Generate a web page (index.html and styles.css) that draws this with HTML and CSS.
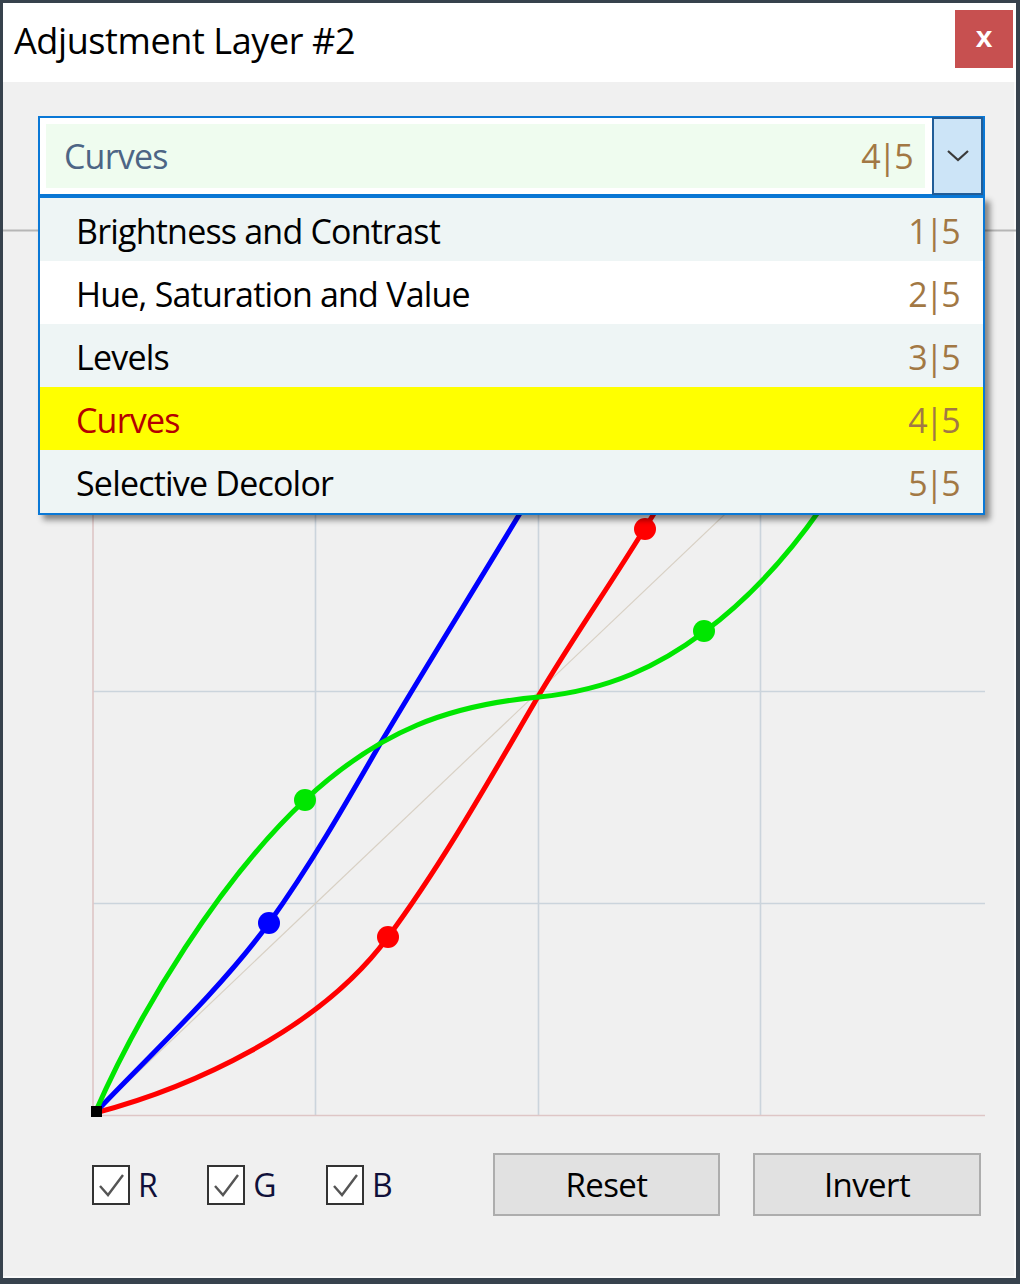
FILE: index.html
```html
<!DOCTYPE html>
<html>
<head>
<meta charset="utf-8">
<link rel="stylesheet" href="styles.css">
</head>
<body>
<div class="window">
  <div class="titlebar">
    <span class="title">Adjustment Layer #2</span>
    <div class="close">x</div>
  </div>
  <div class="main">
    <div class="combo">
      <div class="field"><span class="label">Curves</span><span class="num">4|5</span></div>
      <div class="drop-btn">
        <svg width="24" height="14" viewBox="0 0 24 14"><path d="M2 2 L12 11 L22 2" fill="none" stroke="#3a3a3a" stroke-width="2.2"/></svg>
      </div>
      <ul class="list">
        <li class="row alt"><span>Brightness and Contrast</span><span class="num">1|5</span></li>
        <li class="row"><span>Hue, Saturation and Value</span><span class="num">2|5</span></li>
        <li class="row alt"><span>Levels</span><span class="num">3|5</span></li>
        <li class="row sel"><span>Curves</span><span class="num">4|5</span></li>
        <li class="row alt"><span>Selective Decolor</span><span class="num">5|5</span></li>
      </ul>
    </div>
    <svg class="graph" width="1013" height="939" viewBox="3 196 1013 939">
      <line x1="3" y1="230.5" x2="1016" y2="230.5" stroke="#b6b6b6" stroke-width="2"/>
      <g stroke="#cbd4dc" stroke-width="1.6">
        <line x1="315.5" y1="267" x2="315.5" y2="1115"/>
        <line x1="538.5" y1="267" x2="538.5" y2="1115"/>
        <line x1="760.5" y1="267" x2="760.5" y2="1115"/>
        <line x1="93" y1="267.5" x2="985" y2="267.5"/>
        <line x1="93" y1="479.5" x2="985" y2="479.5"/>
        <line x1="93" y1="691.5" x2="985" y2="691.5"/>
        <line x1="93" y1="903.5" x2="985" y2="903.5"/>
      </g>
      <g stroke="#dec6c6" stroke-width="1.6">
        <line x1="93" y1="267" x2="93" y2="1115.5"/>
        <line x1="93" y1="1115.5" x2="985" y2="1115.5"/>
      </g>
      <line x1="93" y1="1115" x2="985" y2="267" stroke="#d8d0c4" stroke-width="1.2"/>
      <g fill="none" stroke-width="5" stroke-linecap="round">
        <path stroke="#ff0000" d="M95,1113 C190,1088 320,1030 388,937 C445,860 495,770 539,695 C575,635 610,585 645,528 L700,440"/>
        <path stroke="#0000ff" d="M95,1113 C150,1055 220,990 269,923 C310,866 345,805 380,744 C430,660 480,580 525,505"/>
        <path stroke="#00e600" d="M95,1113 C140,1010 220,880 305,800 C380,730 450,705 539,697 C610,690 660,665 704,632 C750,598 790,555 830,495"/>
      </g>
      <circle cx="388" cy="937" r="11" fill="#ff0000"/>
      <circle cx="645" cy="529" r="11" fill="#ff0000"/>
      <circle cx="269" cy="923" r="11" fill="#0000ff"/>
      <circle cx="305" cy="800" r="11" fill="#00e600"/>
      <circle cx="704" cy="631" r="11" fill="#00e600"/>
      <rect x="91" y="1106" width="11" height="11" fill="#000"/>
    </svg>
    <div class="controls">
      <label class="check"><span class="box"><svg width="34" height="36" viewBox="0 0 34 36"><path d="M6 19 L14 28 L29 8" fill="none" stroke="#555" stroke-width="2.4"/></svg></span><span class="clabel">R</span></label>
      <label class="check"><span class="box"><svg width="34" height="36" viewBox="0 0 34 36"><path d="M6 19 L14 28 L29 8" fill="none" stroke="#555" stroke-width="2.4"/></svg></span><span class="clabel">G</span></label>
      <label class="check"><span class="box"><svg width="34" height="36" viewBox="0 0 34 36"><path d="M6 19 L14 28 L29 8" fill="none" stroke="#555" stroke-width="2.4"/></svg></span><span class="clabel">B</span></label>
      <div class="buttons">
        <button class="btn btn-reset">Reset</button>
        <button class="btn btn-invert">Invert</button>
      </div>
    </div>
  </div>
</div>
</body>
</html>
```

FILE: styles.css
```css
* { box-sizing: border-box; }
html, body { margin: 0; padding: 0; }
body {
  width: 1020px;
  height: 1284px;
  font-family: "Open Sans", "Noto Sans", sans-serif;
  background: #f0f0f0;
}
.window {
  width: 1020px;
  height: 1284px;
  border-style: solid;
  border-color: #37424d;
  border-width: 3px 4px 6px 3px;
  display: flex;
  flex-direction: column;
  background: #f0f0f0;
  box-shadow: inset -2px -2px 0 #fafafa;
}
.titlebar {
  height: 79px;
  background: #ffffff;
  display: flex;
  align-items: flex-start;
  padding-left: 11px;
  flex: none;
}
.title {
  font-size: 36px;
  letter-spacing: -0.4px;
  color: #000;
  line-height: 1;
  margin-top: 20px;
}
.close {
  margin-left: auto;
  margin-right: 3px;
  margin-top: 7px;
  width: 58px;
  height: 58px;
  background: #c75050;
  color: #fff;
  font-weight: bold;
  font-size: 30px;
  line-height: 54px;
  text-align: center;
  font-family: "Liberation Sans", sans-serif;
}
.main {
  flex: 1;
  display: flex;
  flex-direction: column;
}
.combo {
  position: relative;
  margin: 34px 0 0 35px;
  width: 947px;
  height: 80px;
  border: 2px solid #0a78d6;
  background: #fff;
  display: flex;
  align-items: stretch;
}
.field {
  flex: 1;
  margin: 6px 7px 6px 6px;
  background: #effcef;
  display: flex;
  align-items: center;
  justify-content: space-between;
  padding: 0 14px 0 18px;
  font-size: 34px;
  letter-spacing: -0.8px;
}
.field .label { color: #4d6585; }
.num {
  color: #a27844;
  letter-spacing: -2.6px;
}
.drop-btn {
  width: 51px;
  background: #cce4f7;
  border: 2px solid #215d98;
  margin: -1px 0 -1px 0;
  display: flex;
  align-items: center;
  justify-content: center;
}
.list {
  position: absolute;
  left: -2px;
  right: -2px;
  top: calc(100% + 2px);
  margin: 0;
  padding: 0;
  list-style: none;
  border: 2px solid #0a78d6;
  background: #fff;
  box-shadow: 5px 5px 6px rgba(0, 0, 0, 0.45);
  z-index: 2;
}
.row {
  height: 63px;
  display: flex;
  align-items: center;
  justify-content: space-between;
  padding: 2px 25px 0 36px;
  font-size: 34px;
  letter-spacing: -0.8px;
  color: #000;
  background: #ffffff;
}
.row .num { letter-spacing: -2.6px; }
.row.alt { background: #eef5f5; }
.row.sel { background: #ffff00; color: #b40000; }
.row.sel .num { color: #a27844; }
.graph {
  display: block;
  flex: none;
}
.controls {
  display: flex;
  align-items: center;
  padding: 18px 35px 0 89px;
  height: 81px;
}
.check {
  display: flex;
  align-items: center;
  gap: 8px;
  margin-right: 50px;
}
.check + .check + .check { margin-right: 0; }
.box {
  width: 38px;
  height: 40px;
  border: 2px solid #333;
  background: #fff;
  display: flex;
  align-items: center;
  justify-content: center;
}
.clabel {
  font-size: 32px;
  letter-spacing: -0.5px;
  color: #10103a;
}
.buttons {
  margin-left: auto;
  display: flex;
  gap: 33px;
}
.btn {
  height: 63px;
  background: #e1e1e1;
  border: 2px solid #adadad;
  font-family: "Open Sans", "Noto Sans", sans-serif;
  font-size: 33px;
  letter-spacing: -0.6px;
  color: #000;
  padding: 0;
}
.btn-reset { width: 227px; }
.btn-invert { width: 228px; }
```
